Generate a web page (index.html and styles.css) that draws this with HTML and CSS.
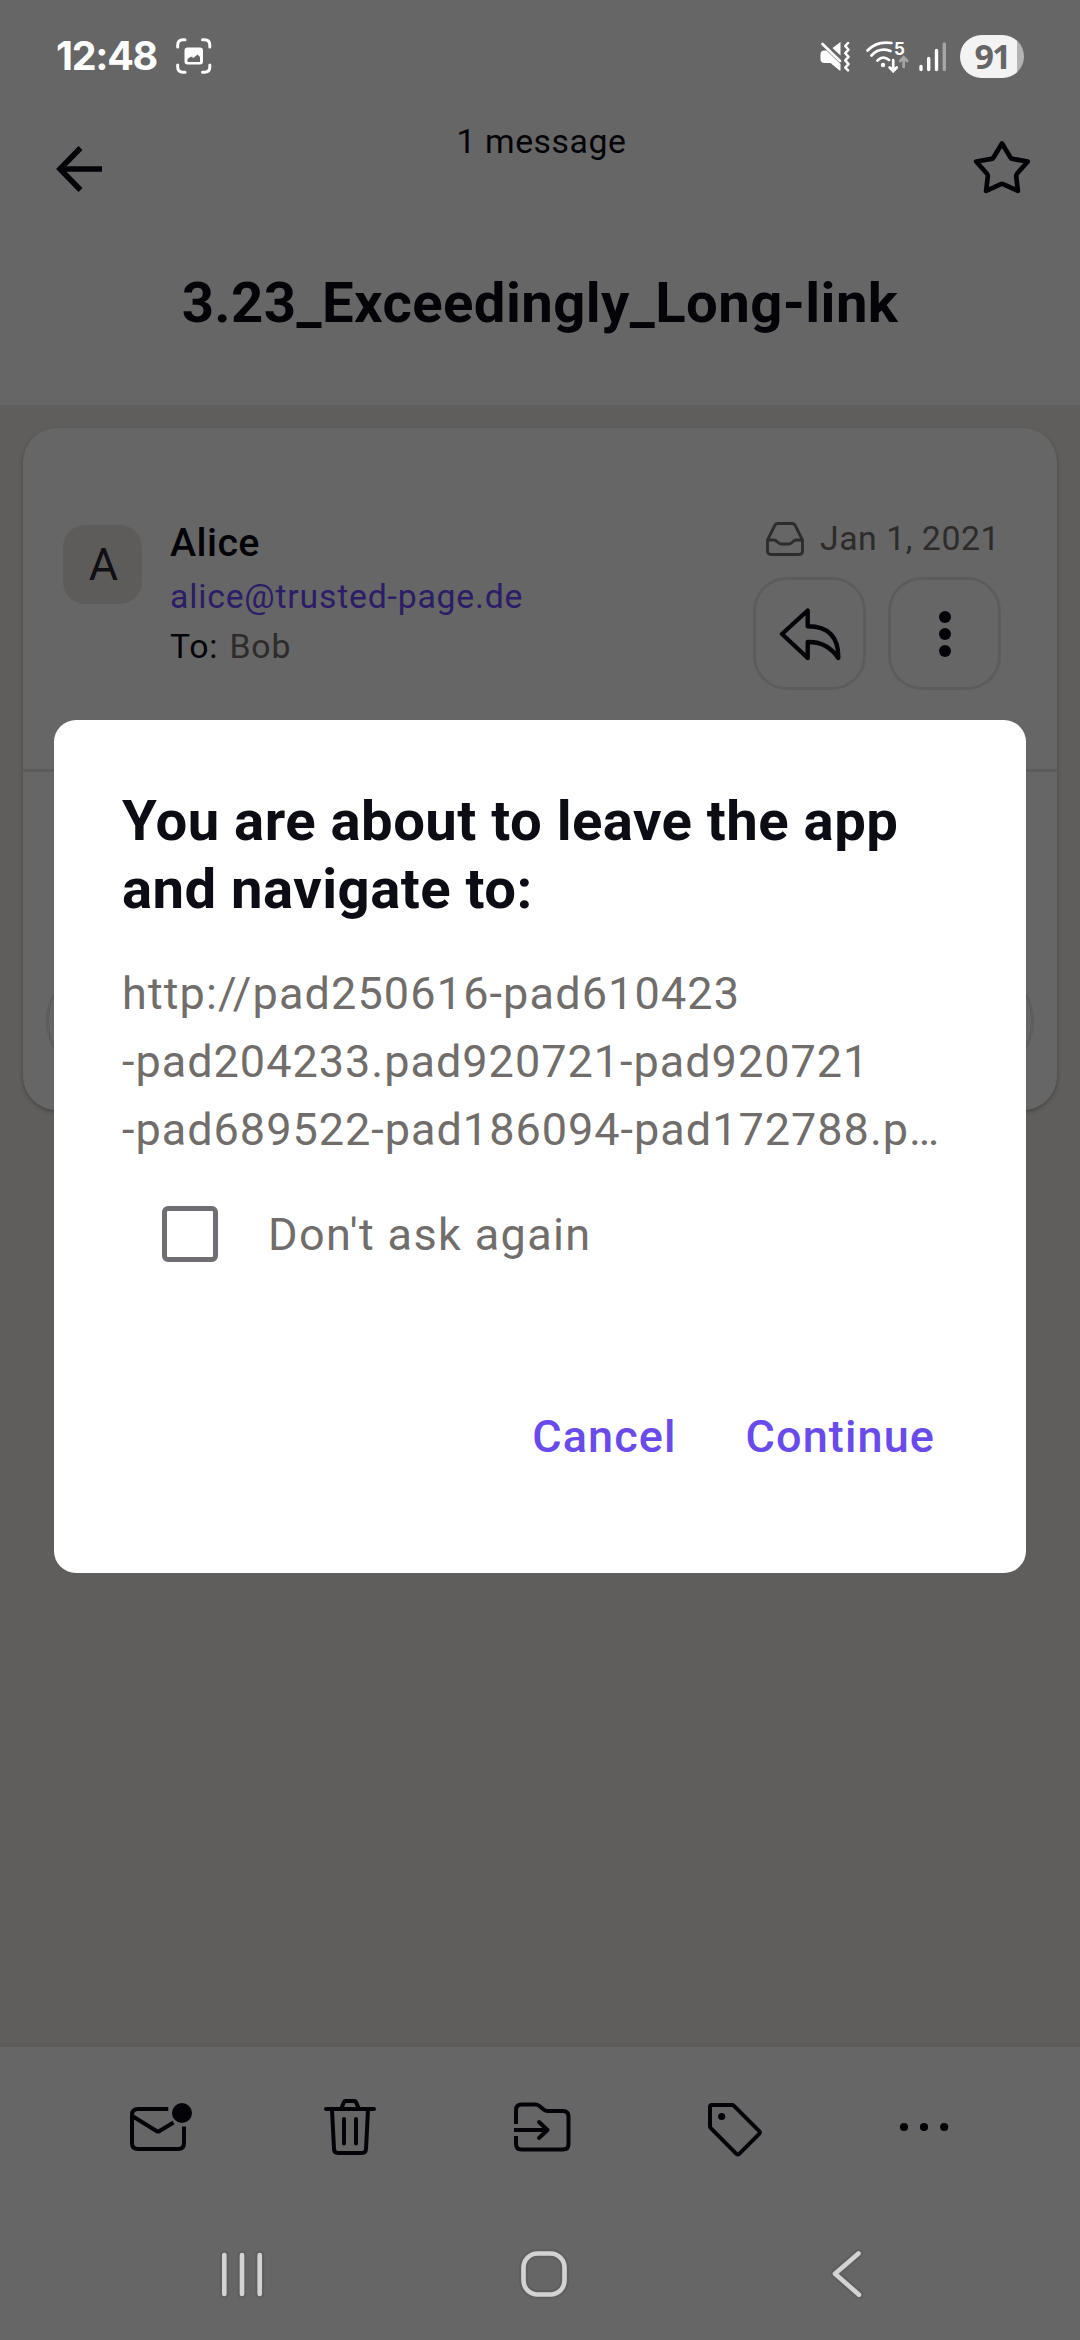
FILE: index.html
```html
<!DOCTYPE html>
<html lang="en">
<head>
<meta charset="utf-8">
<title>Message</title>
<link rel="stylesheet" href="styles.css">
</head>
<body>
<div class="screen">
  <div class="status-bar">
    <span class="clock">12:48</span>
    <svg class="capture-icon" width="36" height="36" viewBox="0 0 36 36" fill="none" stroke="#fff" stroke-width="3" stroke-linecap="round">
      <path d="M1.700 9V7q0-5.300 5.300-5.300H9M26.500 1.700H28.500q5.300 0 5.300 5.300V9M33.800 27v2q0 5.300-5.300 5.300H26.500M9 34.300H7q-5.300 0-5.300-5.300V27"/>
      <rect x="8.500" y="9.500" width="18.500" height="17" rx="3" fill="#fff" stroke="none"/>
      <path d="M11.500 24v-3l3.500-2.500 2.500 1.500 4-3.500 2.500 2.500V24z" fill="#666" stroke="none"/>
    </svg>
    <span class="status-gap"></span>
    <svg class="mute-icon" width="30" height="31" viewBox="0 0 30 31">
      <path d="M12.500 7l8-6v13.500z" fill="#fff"/>
      <path d="M4.500 9.500h2l14 13.500v6.500h-1L10.500 22H4.500q-4 0-4-4v-4.500q0-4 4-4z" fill="#fff"/>
      <path d="M2.500 3L20 20" stroke="#fff" stroke-width="2.600" stroke-linecap="round"/>
      <path d="M28 2l-2.700 3 3.200 3.700-3.200 3.500 3.200 3.700-3.200 3.500 3.200 3.700-3.200 3.500 2.700 2.800" fill="none" stroke="#fff" stroke-width="2.500" stroke-linecap="round" stroke-linejoin="round"/>
    </svg>
    <svg class="wifi-icon" width="43" height="33" viewBox="0 0 43 33" fill="none" stroke="#fff" stroke-width="2.700" stroke-linecap="round">
      <path d="M1.500 10.500C8 3.500 16 1.500 25.500 3M5.500 15.500C11 9.500 17.500 8.500 24.500 11M11.500 20.500c4-3.800 7.500-3.800 11.500-.5"/>
      <circle cx="17" cy="25" r="2.200" fill="#fff" stroke="none"/>
      <path d="M27.200 20v11M23.700 27.500l3.500 3.700 3.500-3.700"/>
      <path d="M37.700 27V17.500M34.200 21l3.500-3.700 3.500 3.700" stroke="#a6a6a6"/>
      <text x="28" y="14.500" class="wifi-band">5</text>
    </svg>
    <svg class="signal-icon" width="28" height="31" viewBox="0 0 28 31" fill="none" stroke="#fff" stroke-width="3.400" stroke-linecap="round">
      <path d="M2 25.500v3M9.700 17.500v11M17.500 9.500v19"/><path d="M25.300 3v25.500" stroke="#a6a6a6"/>
    </svg>
    <span class="battery">91</span>
  </div>

  <header class="header">
    <div class="header-row">
      <svg class="back" width="48" height="48" viewBox="0 0 48 48" fill="none" stroke="#0c0c14" stroke-width="5.600">
        <path d="M4 24H46M24.500 3L4 24l20.500 21"/>
      </svg>
      <span class="count">1 message</span>
      <svg class="star" width="60" height="56" viewBox="972 140 60 56" fill="none" stroke="#0c0c14" stroke-width="4.700" stroke-linejoin="round">
        <path d="M1002 143.500l8.500 14q.7 1.200 2 1.400l15.300 2.600-10.600 12q-1.200 1.300-1 3l1.700 14.400-14.800-6.800q-1.100-.5-2.200 0L986.100 190.900l1.700-14.400q.2-1.700-1-3l-10.600-12 15.300-2.600q1.300-.2 2-1.400z"/>
      </svg>
    </div>
    <h1 class="subject">3.23_Exceedingly_Long-link</h1>
  </header>

  <main class="content">
    <article class="card">
      <div class="card-head">
        <span class="avatar">A</span>
        <div class="sender">
          <span class="name">Alice</span>
          <span class="email">alice@trusted-page.de</span>
          <span class="to">To: <span class="to-name">Bob</span></span>
        </div>
        <div class="meta">
          <div class="date">
            <svg width="40" height="36" viewBox="0 0 40 36" fill="none" stroke="#706d6b" stroke-width="2.800" stroke-linejoin="round">
              <path d="M2.500 19L9.500 5q1-2.500 3.500-2.500H27q2.500 0 3.500 2.500L37.500 19v11q0 3.500-3.500 3.500H6q-3.500 0-3.500-3.500zM2.500 19H9c3 0 4 4 7 4h8c3 0 4-4 7-4h6.500"/>
            </svg>
            <span>Jan 1, 2021</span>
          </div>
          <div class="actions">
            <span class="action">
              <svg width="62" height="56" viewBox="779 606 62 56" fill="none" stroke="#0c0c14" stroke-width="4.400" stroke-linejoin="round">
                <path d="M807.700 610.500v15.800c21 0 31 11 30.600 31.700-7.500-11-17-16.500-30.600-16v16L782 634z"/>
              </svg>
            </span>
            <span class="action">
              <svg width="12" height="48" viewBox="0 0 12 48" fill="#0c0c14"><circle cx="6" cy="7" r="6"/><circle cx="6" cy="24" r="6"/><circle cx="6" cy="41" r="6"/></svg>
            </span>
          </div>
        </div>
      </div>
      <div class="card-body"><span class="reply-pill"></span></div>
    </article>
  </main>

  <div class="toolbar">
    <svg class="tool-mail" width="64" height="62" viewBox="129 2096 64 62" fill="none" stroke="#0c0c14" stroke-width="4">
      <path d="M168.300 2109H138q-6 0-6 6v28q0 6 6 6h40q6 0 6-6v-16.500M133 2116.500l23.500 14.500q1.500 1 3 0l14-8.500"/>
      <circle cx="182" cy="2113" r="10" fill="#0c0c14" stroke="none"/>
    </svg>
    <svg width="54" height="62" viewBox="323 2096 54 62" fill="none" stroke="#0c0c14" stroke-width="4" stroke-linecap="round" stroke-linejoin="round">
      <path d="M326 2109h48M332 2109.500l2 39.500q.2 4 4 4h24q3.800 0 4-4l2-39.500M341.500 2108l2.500-6q.5-1 1.500-1h9q1 0 1.500 1l2.500 6M344 2119v24.500M356 2119v24.500"/>
    </svg>
    <svg width="60" height="62" viewBox="511 2096 60 62" fill="none" stroke="#0c0c14" stroke-width="4">
      <path d="M515 2124v-14q0-5.500 5.500-5.500h14q2 0 3.500 1.200l5 4.100q1.500 1.200 3.500 1.200h15.500q5.500 0 5.500 5.500v27.500q0 5.500-5.500 5.500h-41.500q-5.500 0-5.500-5.500V2136M513 2130h33"/>
      <path d="M538 2122l8.500 8-8.500 8" stroke-linecap="round" stroke-linejoin="round"/>
    </svg>
    <svg width="58" height="62" viewBox="706 2096 58 62" fill="none" stroke="#0c0c14" stroke-width="4">
      <path d="M712 2105h20q1.200 0 2 .8l25.200 25.400q1.200 1.300 0 2.600l-20 20q-1.400 1.400-2.800 0l-25.600-25.600q-.8-.8-.8-2V2107q0-2 2-2z"/>
      <circle cx="721.700" cy="2116.500" r="3.600" fill="#0c0c14" stroke="none"/>
    </svg>
    <svg width="50" height="62" viewBox="899 2096 50 62" fill="#0c0c14"><circle cx="904" cy="2127" r="4.100"/><circle cx="924" cy="2127" r="4.100"/><circle cx="944.200" cy="2127" r="4.100"/></svg>
  </div>

  <div class="nav-bar">
    <svg width="50" height="52" viewBox="217 2248 50 52" fill="none" stroke-linecap="round">
      <path class="halo" d="M224.300 2255v39M242 2255v39M259.700 2255v39"/><path class="key" d="M224.300 2255v39M242 2255v39M259.700 2255v39"/>
    </svg>
    <svg class="nav-home" width="52" height="52" viewBox="518 2248 52 52" fill="none">
      <rect class="halo" x="523.500" y="2253.500" width="41" height="41" rx="14"/><rect class="key" x="523.500" y="2253.500" width="41" height="41" rx="14"/>
    </svg>
    <svg width="38" height="52" viewBox="827 2248 38 52" fill="none" stroke-linecap="round" stroke-linejoin="round">
      <path class="halo" d="M858.500 2253.500L835 2273.700l24 21"/><path class="key" d="M858.500 2253.500L835 2273.700l24 21"/>
    </svg>
  </div>

  <div class="scrim">
    <section class="dialog">
      <h2 class="dialog-title">You are about to leave the app and navigate to:</h2>
      <p class="url"><span class="url-host">http://pad250616-pad610423</span><br>-pad204233.pad920721-pad920721<br>-pad689522-pad186094-pad172788.p…</p>
      <label class="remember"><span class="checkbox"></span>Don't ask again</label>
      <div class="buttons"><span>Cancel</span><span>Continue</span></div>
    </section>
  </div>
</div>
</body>
</html>
```
FILE: styles.css
```css
* { box-sizing: border-box; }
body { margin: 0; font-family: Roboto, "Liberation Sans", sans-serif; color: #0c0c14; }
h1, h2, p { margin: 0; }
svg { display: block; flex: none; }

.screen { position: relative; width: 1080px; height: 2340px; display: flex; flex-direction: column; overflow: hidden; background: #fff; }

.status-bar { position: relative; z-index: 2; height: 112px; padding: 0 56px; display: flex; align-items: center; color: #fff; }
.clock { font: 700 39.5px/48px Inter, sans-serif; letter-spacing: -1.3px; width: 120px; }
.status-gap { flex: 1; }
.mute-icon { margin-right: 16px; }
.wifi-icon { margin-right: 10px; }
.wifi-band { font: 700 17px Inter, sans-serif; fill: #fff; stroke: none; }
.signal-icon { margin-right: 13px; }
.battery { width: 64px; height: 43px; border-radius: 22px; text-align: center; font: 700 34px/43px "Open Sans", sans-serif; letter-spacing: -2px; color: #666; background: linear-gradient(90deg, #f3f3f3 57px, #b3b3b3 57px); }

.header { height: 293px; flex: none; }
.header-row { height: 113px; display: grid; grid-template-columns: 300px 1fr 300px; align-items: start; text-align: center; }
.back { margin: 33px 0 0 56px; }
.star { margin: 28px 48px 0 auto; }
.count { margin-top: 7px; padding-left: 3px; font-size: 33.75px; line-height: 45px; letter-spacing: .56px; }
.subject { margin-top: 44px; text-align: center; font-size: 56.25px; line-height: 68px; font-weight: 700; letter-spacing: .42px; }

.content { flex: 1; padding: 23px; background: #efece7; border-bottom: 3px solid #e8e6e1; }
.card { height: 682px; border-radius: 34px; background: #fff; box-shadow: 0 2px 5px rgba(0, 0, 0, .28); display: flex; flex-direction: column; }
.card-head { height: 344px; padding: 86px 56px 0 40px; display: flex; align-items: flex-start; border-bottom: 3px solid #e9e7e2; }
.avatar { width: 79px; height: 79px; margin: 11px 28px 0 0; padding-left: 2px; border-radius: 22px; background: #e9e7e2; text-align: center; font-size: 45px; line-height: 79px; color: #2a2a32; }
.sender { display: flex; flex-direction: column; font-size: 33.75px; line-height: 45px; letter-spacing: .8px; }
.name { margin-top: 1px; font-size: 39.4px; line-height: 56px; font-weight: 500; letter-spacing: .4px; }
.email { margin-top: 3px; color: #6d4aff; }
.to { margin-top: 5px; }
.to-name { color: #706d6b; margin-left: 2px; }
.meta { margin-left: auto; }
.date { display: flex; align-items: center; justify-content: flex-end; gap: 15px; padding: 2px 1px 0 0; color: #706d6b; font-size: 33.75px; line-height: 45px; letter-spacing: .56px; }
.actions { display: flex; gap: 22px; margin-top: 16px; }
.action { width: 113px; height: 113px; border: 3px solid #e9e7e2; border-radius: 34px; display: grid; place-items: center; }
.card-body { flex: 1; padding: 193px 23px 0; }
.reply-pill { display: block; height: 112px; border: 3px solid #ece9e6; border-radius: 56px; }

.toolbar { height: 160px; flex: none; padding-left: 129px; display: flex; gap: 134.5px; align-items: center; }
.tool-mail { margin-right: -4.5px; }
.nav-bar { position: relative; z-index: 2; height: 133px; flex: none; padding: 41px 215px 0 217px; display: flex; justify-content: space-between; align-items: flex-start; }
.nav-home { margin: 0 3px 0 -3px; }
.halo { stroke: #5f5f5f; stroke-width: 9px; }
.key { stroke: #d3d3d3; stroke-width: 4.6px; }

.scrim { position: absolute; inset: 0; padding: 720px 54px 0; background: rgba(0, 0, 0, .6); }
.dialog { height: 853px; padding: 67px 68px 0; border-radius: 22px; background: #fff; }
.dialog-title { font-size: 56.25px; line-height: 68px; font-weight: 700; letter-spacing: .46px; width: 810px; }
.url { margin-top: 37px; font-size: 45px; line-height: 68px; letter-spacing: 1px; white-space: nowrap; color: #706d6b; }
.url-host { letter-spacing: 1.13px; }
.remember { margin: 42px 0 0 40px; height: 56px; display: flex; align-items: center; gap: 50px; font-size: 45px; letter-spacing: 1.35px; color: #706d6b; }
.checkbox { width: 56px; height: 56px; border: 5px solid #706e73; border-radius: 6px; }
.buttons { margin: 141px 23px 0 0; display: flex; justify-content: flex-end; gap: 69px; font-size: 45px; line-height: 68px; font-weight: 500; letter-spacing: 1.1px; color: #684bea; }
```
